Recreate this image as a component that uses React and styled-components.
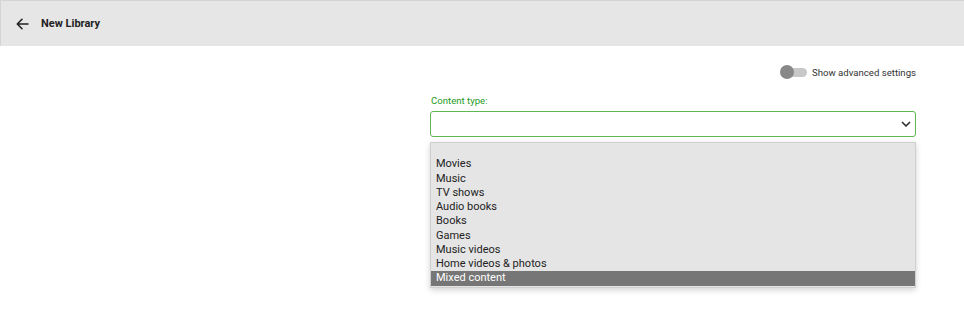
import React from "react";
import styled, { createGlobalStyle } from "styled-components";

const Global = createGlobalStyle`
  html, body { margin: 0; padding: 0; background: #fff; }
  body { font-family: Roboto, "Liberation Sans", Arial, sans-serif; }
`;

const Page = styled.div`
  width: 964px;
  height: 326px;
  display: flex;
  flex-direction: column;
  overflow: hidden;
`;

const Header = styled.header`
  background: #e6e6e6;
  border-top: 1px solid #d4d4d4;
  border-left: 1px solid #d4d4d4;
  display: flex;
  align-items: center;
  padding-left: 14px;
  gap: 11px;
  box-sizing: border-box;
  flex: 0 0 46px;
`;

const BackButton = styled.button`
  border: none;
  background: none;
  padding: 0;
  width: 15px;
  height: 15px;
  display: flex;
  align-items: center;
  justify-content: center;
  color: #222;
`;

const Title = styled.h1`
  margin: 0;
  font-size: 11px;
  font-weight: 700;
  color: #222;
`;

const Body = styled.main`
  flex: 1;
  display: flex;
  justify-content: flex-end;
  padding: 19px 48px 0 0;
`;

const Form = styled.div`
  width: 486px;
  display: flex;
  flex-direction: column;
`;

const ToggleRow = styled.label`
  display: flex;
  align-items: center;
  justify-content: flex-end;
  gap: 5px;
  font-size: 9.6px;
  color: #333;
  height: 14px;
`;

const Track = styled.span`
  position: relative;
  width: 26px;
  height: 9px;
  border-radius: 5px;
  background: #c8c8c8;
`;

const Knob = styled.span`
  position: absolute;
  left: -1px;
  top: -2.5px;
  width: 14px;
  height: 14px;
  border-radius: 50%;
  background: #888;
`;

const FieldLabel = styled.div`
  margin-top: 16px;
  font-size: 9.6px;
  color: #1f9a1f;
  padding-left: 1px;
  line-height: 12px;
`;

const SelectBox = styled.div`
  margin-top: 4px;
  height: 26px;
  box-sizing: border-box;
  border: 1px solid #5cb84f;
  border-radius: 3px;
  display: flex;
  align-items: center;
  justify-content: flex-end;
  padding-right: 4px;
  color: #333;
`;

const Dropdown = styled.ul`
  list-style: none;
  margin: 5px 0 0;
  padding: 0 0 1px;
  background: #e5e5e5;
  border: 1px solid #cfcfcf;
  box-shadow: 0 2px 6px rgba(0, 0, 0, 0.18);
  font-size: 11px;
  color: #222;
`;

const Option = styled.li`
  height: 14.25px;
  line-height: 14px;
  padding-left: 5px;
  background: ${(p) => (p.$selected ? "#767676" : "transparent")};
  color: ${(p) => (p.$selected ? "#fff" : "#222")};
`;

const options = [
  "",
  "Movies",
  "Music",
  "TV shows",
  "Audio books",
  "Books",
  "Games",
  "Music videos",
  "Home videos & photos",
  "Mixed content",
];

export default function App() {
  return (
    <>
      <Global />
      <Page>
        <Header>
          <BackButton aria-label="Back">
            <svg width="13" height="12" viewBox="0 0 13 12" fill="none" stroke="#222" strokeWidth="1.6" strokeLinecap="round" strokeLinejoin="round">
              <path d="M12 6H1.5M6 1.3L1.3 6L6 10.7" />
            </svg>
          </BackButton>
          <Title>New Library</Title>
        </Header>
        <Body>
          <Form>
            <ToggleRow>
              <Track>
                <Knob />
              </Track>
              Show advanced settings
            </ToggleRow>
            <FieldLabel>Content type:</FieldLabel>
            <SelectBox>
              <svg width="10" height="7" viewBox="0 0 10 7" fill="none" stroke="#333" strokeWidth="1.7" strokeLinecap="round" strokeLinejoin="round">
                <path d="M1.5 1.5L5 5L8.5 1.5" />
              </svg>
            </SelectBox>
            <Dropdown>
              {options.map((o, i) => (
                <Option key={i} $selected={o === "Mixed content"}>
                  {o || "\u00a0"}
                </Option>
              ))}
            </Dropdown>
          </Form>
        </Body>
      </Page>
    </>
  );
}
